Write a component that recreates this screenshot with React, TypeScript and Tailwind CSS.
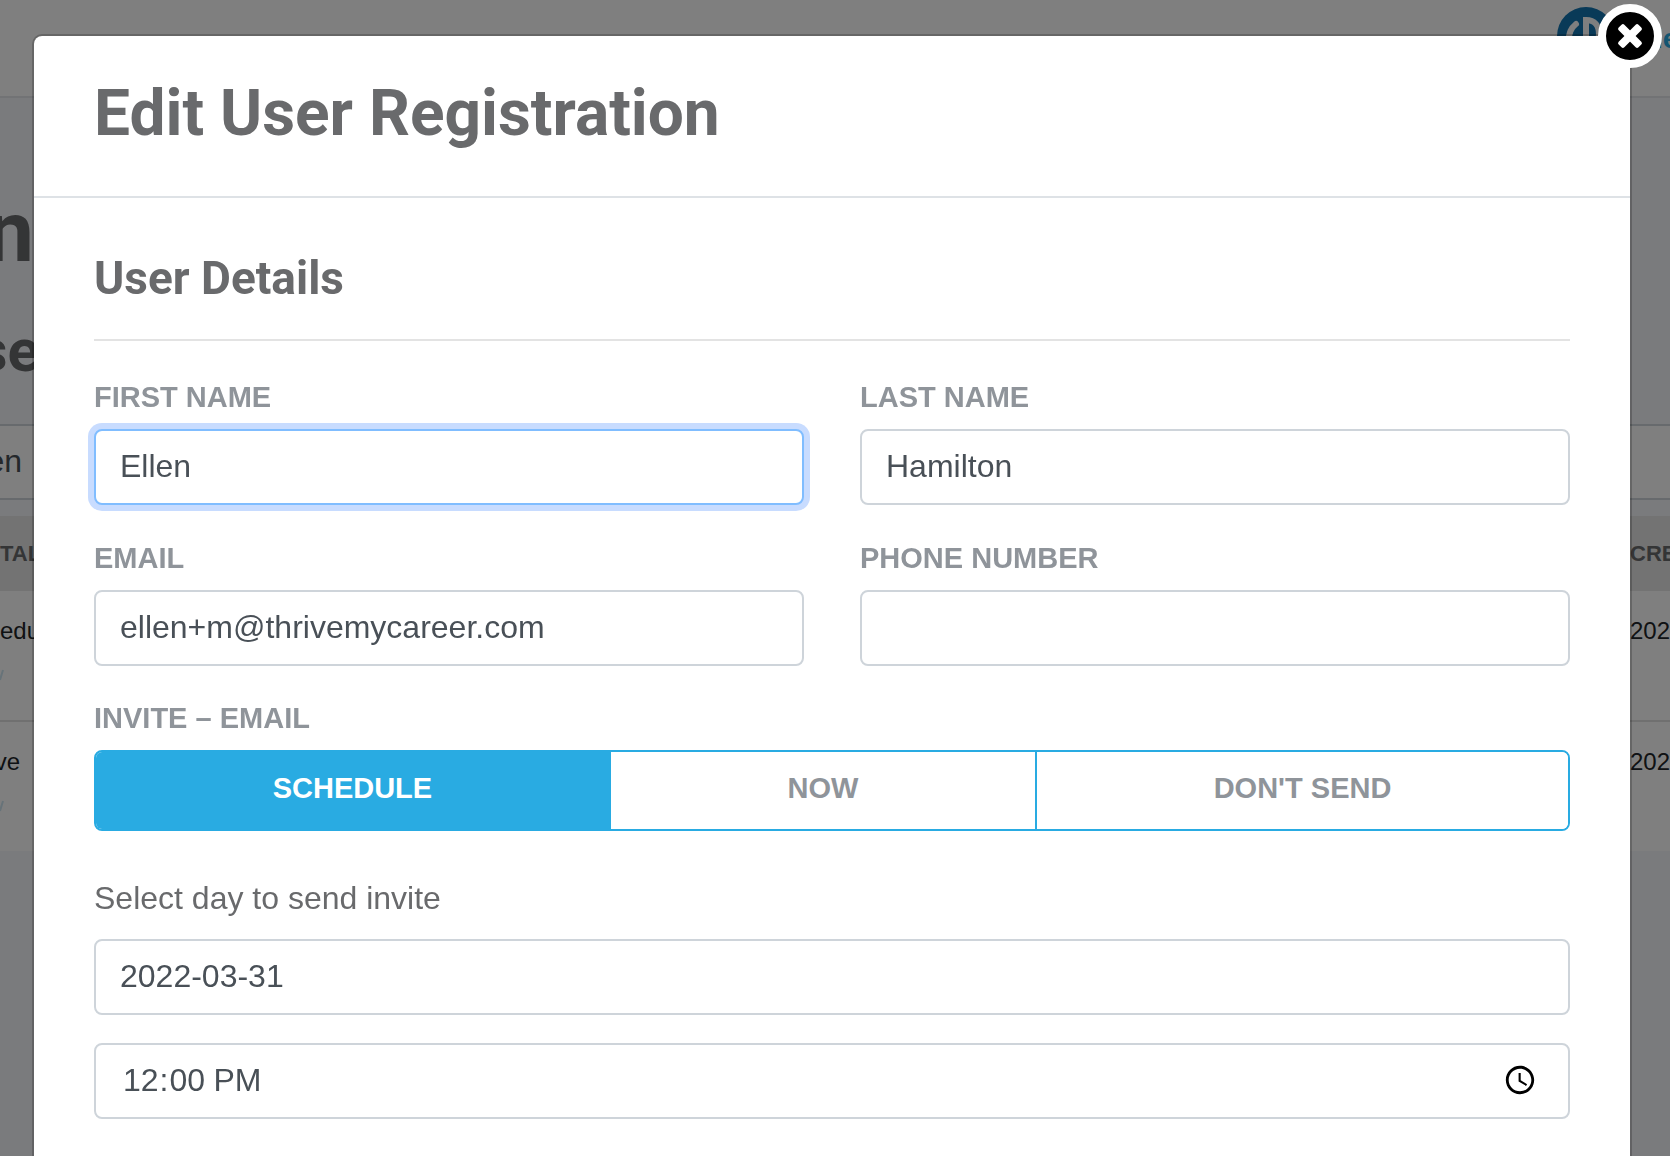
import { useState } from "react";

const inviteOptions = ["Schedule", "Now", "Don't Send"];

const inputClass =
  "block w-full h-[76px] rounded-lg border-2 border-[#ced4da] bg-white px-6 pb-0.5 text-[32px] text-[#495057] outline-none focus:border-[#80bdff] focus:ring-6 focus:ring-[#c8dcff]";

const labelClass = "block text-[29px] leading-10 font-bold uppercase text-[#8f949a]";

type FieldProps = {
  id: string;
  label: string;
  type?: string;
  defaultValue?: string;
  autoFocus?: boolean;
};

function Field({ id, label, type = "text", defaultValue, autoFocus }: FieldProps) {
  return (
    <div className="flex flex-col gap-3">
      <label htmlFor={id} className={labelClass}>
        {label}
      </label>
      <input id={id} type={type} defaultValue={defaultValue} autoFocus={autoFocus} className={inputClass} />
    </div>
  );
}

function Logo() {
  return (
    <svg className="size-[58px]" viewBox="0 0 58 58" fill="none">
      <circle cx="29" cy="29" r="29" fill="#1274b0" />
      <path
        d="M19 17c-5 4-7 8-8 20M29 40V13c9 0 13 6 13 14s-6 13-13 13"
        stroke="#fff"
        strokeWidth="6"
        strokeLinecap="round"
      />
    </svg>
  );
}

function CloseIcon() {
  return (
    <svg className="size-7" viewBox="0 0 28 28" fill="currentColor">
      <rect x="0" y="10" width="28" height="8" rx="2" transform="rotate(45 14 14)" />
      <rect x="0" y="10" width="28" height="8" rx="2" transform="rotate(-45 14 14)" />
    </svg>
  );
}

function EditMark() {
  return (
    <svg className="mt-5 h-3 w-1" viewBox="0 0 4 12">
      <path d="M0 11L3 1" stroke="#cfe6f2" strokeWidth="2" />
    </svg>
  );
}

// The registrations list that stays behind the dialog
function RegistrationsPage() {
  const rows = [
    { portal: "edu", created: "202" },
    { portal: "ve", created: "202" },
  ];

  return (
    <div className="min-h-screen overflow-hidden bg-[#f4f6fa]" aria-hidden="true">
      <header className="flex h-[98px] items-start justify-end gap-10 overflow-hidden border-b-2 border-[#e4e6ea] bg-white pt-[7px]">
        <Logo />
        <span className="w-[15px] pt-3.5 text-[28px] leading-9 font-bold whitespace-nowrap text-[#29abe2]">le</span>
      </header>

      <div className="flex w-10 flex-col items-end pt-[84px] font-['Roboto'] font-bold text-[#696a6c]">
        <h1 className="pr-1.5 text-[85px] leading-[100px]">n</h1>
        <h2 className="pt-8 text-[60px] leading-[74px]">se</h2>
      </div>

      <div className="mt-9 flex h-[76px] items-center border-y-2 border-[#ced4da] bg-white pb-0.5 text-[32px] text-[#495057]">
        <span className="flex w-[22px] justify-end">en</span>
      </div>

      <table className="mt-4 w-full text-left text-[24px] text-[#212529]">
        <thead>
          <tr className="h-[75px] bg-[#e6e6e6] text-[22px] text-[#696a6c]">
            <th>TAL</th>
            <th className="w-10 max-w-10 overflow-hidden">CRE</th>
          </tr>
        </thead>
        <tbody>
          {rows.map((row) => (
            <tr key={row.portal} className="h-[130px] border-b-2 border-[#e0e0e0] bg-white align-top last:border-b-0">
              <td className="pt-[22px]">
                <span className={`flex ${row.portal === "ve" ? "w-5 justify-end" : ""}`}>{row.portal}</span>
                <EditMark />
              </td>
              <td className="w-10 max-w-10 overflow-hidden pt-[22px]">{row.created}</td>
            </tr>
          ))}
        </tbody>
      </table>
    </div>
  );
}

function EditRegistrationDialog() {
  const [invite, setInvite] = useState("Schedule");

  return (
    <div className="fixed inset-0 overflow-hidden bg-black/50 pt-[34px] pr-[38px] pl-8">
      <div
        role="dialog"
        aria-labelledby="dialog-title"
        className="relative min-h-screen rounded-[10px] border-2 border-black/20 bg-white bg-clip-padding"
      >
        <button
          type="button"
          aria-label="Close"
          className="absolute -top-8 -right-8 flex size-16 items-center justify-center rounded-full border-8 border-white bg-black text-white"
        >
          <CloseIcon />
        </button>

        <header className="border-b-2 border-[#dee2e6] px-[60px] pt-[38px] pb-[42px]">
          <h1 id="dialog-title" className="font-['Roboto'] text-[64px] leading-20 font-bold text-[#696a6c]">
            Edit User Registration
          </h1>
        </header>

        <form className="px-[60px] pt-[51px]" onSubmit={(e) => e.preventDefault()}>
          <h2 className="border-b-2 border-[#e3e3e3] pb-8 font-['Roboto'] text-[46px] leading-[58px] font-bold text-[#696a6c]">
            User Details
          </h2>

          <div className="grid grid-cols-2 gap-x-14 gap-y-[33px] pt-9">
            <Field id="first-name" label="First Name" defaultValue="Ellen" autoFocus />
            <Field id="last-name" label="Last Name" defaultValue="Hamilton" />
            <Field id="email" label="Email" type="email" defaultValue="ellen+m@thrivemycareer.com" />
            <Field id="phone" label="Phone Number" type="tel" />
          </div>

          <div role="group" aria-labelledby="invite-label" className="flex flex-col gap-3 pt-8">
            <span id="invite-label" className={labelClass}>
              Invite – Email
            </span>
            <div className="flex h-[81px] divide-x-2 divide-[#29abe2] overflow-hidden rounded-lg border-2 border-[#29abe2]">
              {inviteOptions.map((option) => (
                <button
                  key={option}
                  type="button"
                  aria-pressed={invite === option}
                  onClick={() => setInvite(option)}
                  className={`flex-auto pb-1 text-[29px] font-bold uppercase ${
                    invite === option ? "bg-[#29abe2] text-white" : "bg-white text-[#8f949a]"
                  }`}
                >
                  {option}
                </button>
              ))}
            </div>
          </div>

          <div className="flex flex-col pt-[43px]">
            <label htmlFor="invite-day" className="pb-[17px] text-[32px] leading-12 text-[#696a6c]">
              Select day to send invite
            </label>
            <input id="invite-day" type="text" defaultValue="2022-03-31" className={inputClass} />
            <input
              type="time"
              aria-label="Time to send invite"
              defaultValue="12:00"
              className={`${inputClass} mt-7 pr-7 pl-[26px]`}
            />
          </div>
        </form>
      </div>
    </div>
  );
}

export default function App() {
  return (
    <div className="font-['Liberation_Sans',Arial,sans-serif]">
      <RegistrationsPage />
      <EditRegistrationDialog />
    </div>
  );
}
